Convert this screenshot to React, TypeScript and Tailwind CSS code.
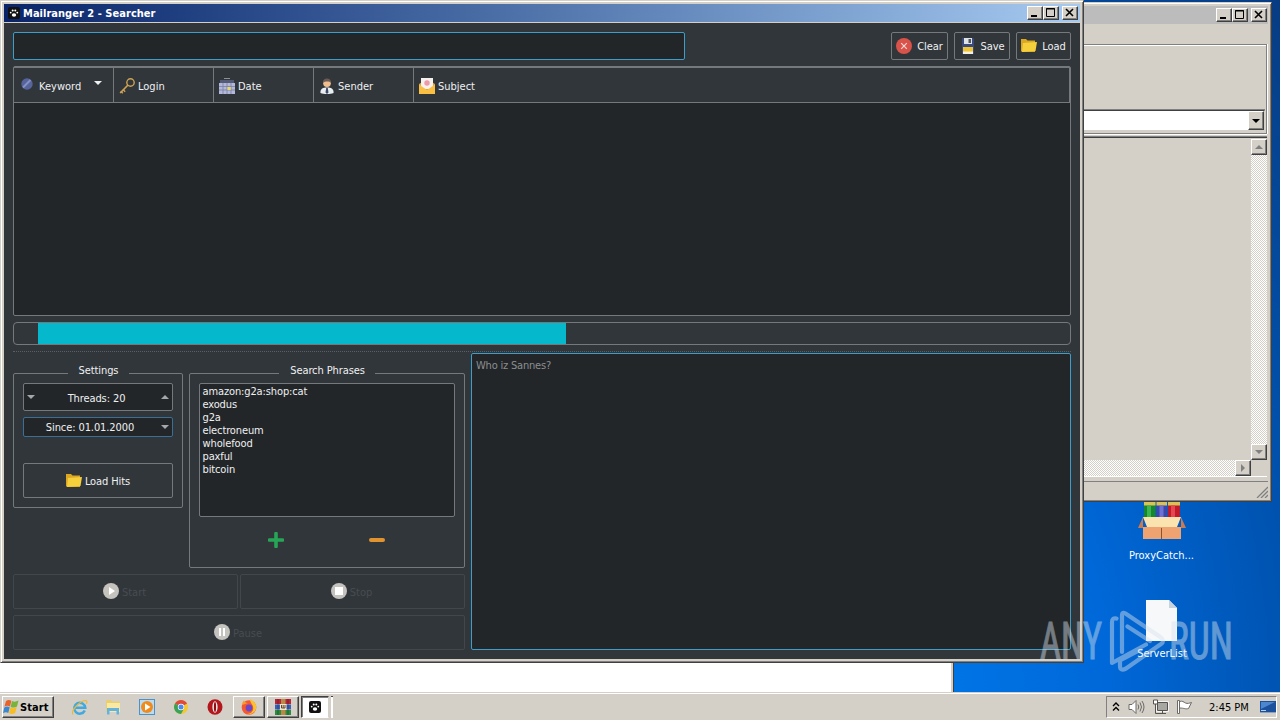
import type { ReactNode } from 'react';

const phrases = ['amazon:g2a:shop:cat', 'exodus', 'g2a', 'electroneum', 'wholefood', 'paxful', 'bitcoin'];

const raised =
  'bg-[#d4d0c8] border border-t-white border-l-white border-r-[#404040] border-b-[#404040] shadow-[inset_-1px_-1px_0_#808080]';

/* ---------- icons ---------- */

function Paw({ size = 12 }: { size?: number }) {
  return (
    <svg width={size} height={size} viewBox="0 0 12 12">
      <rect width="12" height="12" rx="2" fill="#111" />
      <ellipse cx="6" cy="8" rx="2.2" ry="1.700" fill="#fff" />
      <circle cx="2.7" cy="5.6" r=".9" fill="#fff" />
      <circle cx="4.7" cy="3.5" r="1" fill="#fff" />
      <circle cx="7.3" cy="3.5" r="1" fill="#fff" />
      <circle cx="9.3" cy="5.6" r=".9" fill="#fff" />
    </svg>
  );
}

function ClearIcon() {
  return (
    <svg width="16" height="16" viewBox="0 0 16 16">
      <circle cx="8" cy="8" r="8" fill="#d9534a" />
      <path d="M5.2 5.2l5.6 5.6M10.8 5.2l-5.6 5.6" stroke="#f6d9d5" strokeWidth="1.2" />
    </svg>
  );
}

function SaveIcon() {
  return (
    <svg width="16" height="16" viewBox="0 0 16 16">
      <path d="M2 0h11l1 1v15H2z" fill="#3b4a7c" />
      <path d="M4 0h8v6H4z" fill="#dfe3e4" />
      <path d="M8.5 1H11v4H8.5z" fill="#4d5564" />
      <path d="M3 9h10v7H3z" fill="#f3efe4" />
      <path d="M3 9h10v4.500H3z" fill="#f0c330" />
    </svg>
  );
}

function FolderIcon() {
  return (
    <svg width="16" height="16" viewBox="0 0 16 16">
      <path d="M0 1h5l1.500 1.500H14V14H1L0 13z" fill="#dba822" />
      <path d="M2 5L16 4l-1.500 9L1 14z" fill="#f6cf3c" />
    </svg>
  );
}

function KeywordIcon() {
  return (
    <svg width="12" height="12" viewBox="0 0 12 12">
      <circle cx="6" cy="6" r="5.700" fill="#57649b" />
      <path d="M2 9.500L9.500 2" stroke="#8491c4" strokeWidth="2" />
    </svg>
  );
}

function KeyIcon() {
  return (
    <svg width="16" height="16" viewBox="0 0 16 16" fill="none" stroke="#cda352">
      <circle cx="11.500" cy="4.500" r="3.700" strokeWidth="1.400" />
      <path d="M9 7L1.200 15" strokeWidth="1.700" />
      <path d="M4 11.500l2.200 2.200M1.800 13.200l2 2" strokeWidth="1.400" />
    </svg>
  );
}

function CalendarIcon() {
  return (
    <svg width="16" height="16" viewBox="0 0 16 16">
      <path d="M5 .5h6" stroke="#8d8f99" />
      <path d="M1 2h14v4H1z" fill="#535b76" />
      <path d="M0 5h16v11H0z" fill="#b3b7d8" />
      <path d="M0 8.500h16M0 12h16M4 5v11M8 5v11M12 5v11" stroke="#7a80a6" strokeWidth=".8" />
      <path d="M8.500 9h3.200v3H8.500z" fill="#e8dc62" />
    </svg>
  );
}

function SenderIcon() {
  return (
    <svg width="16" height="16" viewBox="0 0 16 16">
      <path d="M1.500 15c-.5-4 2-5.500 6.500-5.500s7 1.500 6.500 5.500c-3 1.300-10 1.300-13 0z" fill="#e9eef2" />
      <circle cx="8" cy="5.200" r="3.800" fill="#f0bd8c" />
      <path d="M4 4.500C4 1.500 5.500.5 8 .5s4 1 4 4C10.500 3 6 3 4 4.500z" fill="#6b5a55" />
      <path d="M7.200 10h1.600l.7 4.500L8 16l-1.500-1.500z" fill="#3c4c67" />
    </svg>
  );
}

function SubjectIcon() {
  return (
    <svg width="16" height="16" viewBox="0 0 16 16">
      <path d="M0 6l8-5 8 5v10H0z" fill="#e3a02d" />
      <path d="M2 0h12v11H2z" fill="#f5f1ef" />
      <circle cx="8" cy="5" r="2.700" fill="#ee9aa8" />
      <path d="M0 6.500l8 5.500 8-5.500V16H0z" fill="#f8bf43" />
    </svg>
  );
}

function RoundIcon({ children }: { children: ReactNode }) {
  return (
    <svg width="16" height="16" viewBox="0 0 16 16">
      <circle cx="8" cy="8" r="8" fill="#c4c3bd" />
      {children}
    </svg>
  );
}

function Triangle({ dir, fill }: { dir: 'up' | 'down' | 'right'; fill: string }) {
  const d = { up: 'M0 4L4 0L8 4z', down: 'M0 0h8L4 4z', right: 'M2 -2v8l4-4z' }[dir];
  return (
    <svg width="8" height="4" viewBox="0 0 8 4" overflow="visible" className="shrink-0">
      <path d={d} fill={fill} />
    </svg>
  );
}

function WindowsFlag() {
  return (
    <svg width="17" height="16" viewBox="0 0 17 16">
      <path d="M3 2C5 .5 6.500.700 8.400 1.700L7 7.600C5 6.600 3.500 6.600 1.400 7.800z" fill="#e8622c" />
      <path d="M9 2c2 1 4 .8 6.500-.5L14 7.600c-2 1.300-4.200 1.300-6.400.3z" fill="#79b33c" />
      <path d="M1.300 8.400c2-1.200 3.500-1.200 5.400-.2l-1.400 5.800c-1.700-1-3.300-1-5.300.2z" fill="#3a86cf" />
      <path d="M7.400 8.500c2 1 4 .8 6.400-.5L12.200 14c-2 1.300-4.200 1.400-6.200.3z" fill="#f6bd28" />
    </svg>
  );
}

function IeIcon() {
  return (
    <svg width="17" height="17" viewBox="0 0 17 17" fill="none">
      <path d="M13.800 11.500A5.500 5.500 0 1 1 14.300 8.800H4" stroke="#3fa9e0" strokeWidth="2.500" />
      <path d="M2 15.500C-1 13 8 2 14.500 1.500c2 0 1.500 2 .8 3.300" stroke="#e9b83a" strokeWidth="1.200" />
    </svg>
  );
}

function ExplorerIcon() {
  return (
    <svg width="16" height="16" viewBox="0 0 16 16">
      <path d="M1 1h5l1 1.500h8V13H1z" fill="#e9cf70" />
      <path d="M2 4h13v9H2z" fill="#f8e9a4" />
      <path d="M2 15.500V9h12v6.500h-2.500V12h-7v3.500z" fill="#63b2df" />
    </svg>
  );
}

function PlayerIcon() {
  return (
    <svg width="16" height="16" viewBox="0 0 16 16">
      <rect x=".5" y=".5" width="15" height="15" fill="#b9dcf2" stroke="#4b92c9" />
      <circle cx="8" cy="8" r="6" fill="#f18a1c" />
      <path d="M6 4.500v7L11.500 8z" fill="#fff" />
    </svg>
  );
}

function ChromeIcon() {
  return (
    <svg width="14" height="14" viewBox="0 0 14 14">
      <circle cx="7" cy="7" r="7" fill="#f5c731" />
      <path d="M7 7L.95 3.500A7 7 0 0 1 13.050 3.500z" fill="#de4a3c" />
      <path d="M7 7L.95 3.500A7 7 0 0 0 7 14l2.500-4.500z" fill="#3ba357" />
      <circle cx="7" cy="7" r="3.200" fill="#fff" />
      <circle cx="7" cy="7" r="2.500" fill="#4a8af0" />
    </svg>
  );
}

function OperaIcon() {
  return (
    <svg width="16" height="16" viewBox="0 0 16 16">
      <ellipse cx="8" cy="8" rx="7.500" ry="7.800" fill="#b3161b" />
      <ellipse cx="8" cy="8" rx="2.600" ry="5.800" fill="#f6eeec" />
      <ellipse cx="8" cy="8" rx="1.100" ry="5" fill="#8d0f14" />
    </svg>
  );
}

function FirefoxIcon() {
  return (
    <svg width="16" height="16" viewBox="0 0 16 16">
      <circle cx="8" cy="8.500" r="7.300" fill="#f5572f" />
      <path d="M9 0c4 2 7 5 6.200 9.500C14 14 9 16 6 15c5 0 7-4 6-7.500S9 4 9 0z" fill="#fdc32f" />
      <path d="M1.200 6C1 4 2 2.500 3 1.500 3.500 3 5 4 7 4z" fill="#fb9a2c" />
      <circle cx="8" cy="9" r="3.400" fill="#6a47c8" />
    </svg>
  );
}

function WinrarIcon() {
  return (
    <svg width="16" height="16" viewBox="0 0 16 16">
      <path d="M0 0h16v5H0z" fill="#b52534" />
      <path d="M0 5.500h16v5H0z" fill="#3a5fb4" />
      <path d="M0 11h16v5H0z" fill="#2e8a3c" />
      <path d="M6 0h4.500v16H6z" fill="#b88a45" />
      <path d="M5 5h6.500v6H5z" fill="#eee6d0" />
      <path d="M6.500 6v3h3.500V6M8.200 6v3" stroke="#67492a" fill="none" />
      <path d="M3 0v16M13 0v16" stroke="#1b1b2b" strokeOpacity=".4" />
    </svg>
  );
}

function SpeakerIcon() {
  return (
    <svg width="17" height="16" viewBox="0 0 17 16" fill="none" stroke="#6c6a66">
      <path d="M1 5.500h3l4-4v13l-4-4H1z" fill="#fff" />
      <path d="M10 5.500q1.500 2.500 0 5M12 3.500q3 4.500 0 9M14 2q4 6 0 12" />
    </svg>
  );
}

function NetworkIcon() {
  return (
    <svg width="17" height="16" viewBox="0 0 17 16" fill="none" stroke="#55534f">
      <path d="M5.500 3.500h10v8h-10z" fill="#a9a7a2" stroke="#fff" strokeWidth="2.500" />
      <path d="M5.500 3.500h10v8h-10zM7 14.500h7M10.500 12v2" fill="#a9a7a2" />
      <path d="M1.500 1v4h4V1z" fill="#fff" />
      <path d="M3.500 5v9.500H7" />
    </svg>
  );
}

function FlagIcon() {
  return (
    <svg width="17" height="16" viewBox="0 0 17 16" stroke="#6c6a66">
      <path d="M3.500 2.500c3-1 4 .5 6 1.500s4 0 6-.5l-3 6c-3 1-4-.5-9-.5z" fill="#fff" />
      <path d="M1.500 1.500h2v13h-2z" fill="#fff" />
    </svg>
  );
}

function DesktopIcon() {
  return (
    <svg width="16" height="14" viewBox="0 0 16 14">
      <path d="M0 1h16v11H0z" fill="#1c4f9c" />
      <path d="M1 2h14L1 9z" fill="#4b86cf" />
      <path d="M1 10h5v1H1z" fill="#b5d2ee" />
      <path d="M0 12h16v1H0z" fill="#8aa3c4" />
    </svg>
  );
}

function ArchiveBox() {
  return (
    <svg width="48" height="50" viewBox="0 0 48 50">
      <path d="M6 2h11.500v26H6z" fill="#17862c" />
      <path d="M18.500 2H29v26H18.500z" fill="#4046a8" />
      <path d="M30 2h12v26H30z" fill="#c01b2b" />
      <path d="M6 12h11.500v3.500H6zM18.500 12H29v3.500H18.500zM30 12h12v3.500H30z" fill="#d9c358" />
      <path d="M9 15.500h4v12H9z" fill="#3bb552" />
      <path d="M21.500 15.500h4v12h-4z" fill="#6c72d4" />
      <path d="M33 15.500h4v12h-4z" fill="#e8464f" />
      <path d="M5 27L0 38h5zM43 27l5 11h-5z" fill="#c87a52" />
      <path d="M5 37h38v12H5z" fill="#efa370" />
      <path d="M5 27h38l-4 10H9z" fill="#fbe3b0" />
      <path d="M23.500 38v11" stroke="#8d5230" />
    </svg>
  );
}

/* ---------- window parts ---------- */

function CaptionButton({ children }: { children: ReactNode }) {
  return (
    <button className={`w-4 h-3.5 ${raised}`}>
      <svg width="14" height="12" viewBox="0 0 14 12" fill="none" stroke="#000" className="block">
        {children}
      </svg>
    </button>
  );
}

function CaptionButtons() {
  return (
    <div className="flex">
      <CaptionButton>
        <path d="M3 9h6" strokeWidth="2" />
      </CaptionButton>
      <CaptionButton>
        <path d="M2.500 1.500h8v8h-8zM2 2h9" />
      </CaptionButton>
      <div className="w-[3px]" />
      <CaptionButton>
        <path d="M3 2l7 7M10 2l-7 7" strokeWidth="1.600" />
      </CaptionButton>
    </div>
  );
}

function ToolButton({ className, children }: { className: string; children: ReactNode }) {
  return (
    <button
      className={`h-7 flex items-center justify-center gap-[5px] border border-[#76797c] rounded-xs text-[#eff0f1] tracking-[-0.1px] ${className}`}
    >
      {children}
    </button>
  );
}

function HeaderCell({ icon, label }: { icon: ReactNode; label: string }) {
  return (
    <div className="w-[100px] flex items-center gap-[3px] pl-[5px] pt-[1px] border-r border-[#76797c]">
      {icon}
      <span className="pt-[2px]">{label}</span>
    </div>
  );
}

function DisabledButton({ icon, label, className = '' }: { icon: ReactNode; label: string; className?: string }) {
  return (
    <button
      disabled
      className={`h-[35px] flex items-center justify-center gap-[3px] pr-[2px] border border-[#42474c] rounded-xs text-[#484c50] ${className}`}
    >
      <span className="pb-[2px]">{icon}</span>
      <span className="pt-[2px]">{label}</span>
    </button>
  );
}

function ScrollButton({ dir }: { dir: 'up' | 'down' | 'right' }) {
  return (
    <div className={`w-4 h-4 shrink-0 flex items-center justify-center ${raised}`}>
      <Triangle dir={dir} fill="#808080" />
    </div>
  );
}

const trackPattern = 'bg-[repeating-conic-gradient(#ffffff_0_25%,#d4d0c8_0_50%)] bg-[size:2px_2px]';

/* ---------- windows ---------- */

function BackWindow() {
  return (
    <div className="absolute left-[700px] top-[2px] w-[572px] h-[500px] flex flex-col bg-[#d4d0c8] border border-t-[#d4d0c8] border-l-[#d4d0c8] border-r-[#404040] border-b-[#404040] shadow-[inset_1px_1px_0_#fff,inset_-1px_-1px_0_#808080] p-[3px]">
      <div className="h-[18px] shrink-0 flex items-center justify-end pr-[1px] bg-[#bcbcbc]">
        <CaptionButtons />
      </div>
      <div className="mt-5 mr-[1px] h-[90px] shrink-0 flex flex-col justify-end border border-[#808080] shadow-[inset_0_1px_0_#fff,0_1px_0_#fff,1px_0_0_#fff] pb-[2px] pr-[1px]">
        <div className="h-[21px] flex justify-end bg-white border border-t-[#404040] border-[#d4d0c8] shadow-[0_-1px_0_#808080]">
          <div className={`w-4 h-[19px] flex items-center justify-center ${raised}`}>
            <Triangle dir="down" fill="#000" />
          </div>
        </div>
      </div>
      <div className="mt-[2px] mr-[1px] h-[341px] shrink-0 flex flex-col border-t border-[#808080] border-b border-b-white shadow-[inset_0_1px_0_#404040] pt-[2px]">
        <div className="h-[322px] flex">
          <div className="flex-1" />
          <div className={`w-4 flex flex-col justify-between ${trackPattern}`}>
            <ScrollButton dir="up" />
            <ScrollButton dir="down" />
          </div>
        </div>
        <div className="h-4 flex pr-4">
          <div className={`flex-1 ${trackPattern}`} />
          <ScrollButton dir="right" />
        </div>
      </div>
      <div className="mt-[4px] flex-1 flex justify-end items-end border-t border-[#808080]">
        <svg width="12" height="12" viewBox="0 0 12 12" stroke="#808080" strokeWidth="1.300">
          <path d="M1 12L12 1M5 12l7-7M9 12l3-3" />
        </svg>
      </div>
    </div>
  );
}

function Toolbar() {
  return (
    <div className="flex justify-between">
      <div className="w-[672px] h-7 bg-[#232629] border border-[#3d9fc9] rounded-xs" />
      <div className="flex gap-[6px]">
        <ToolButton className="w-[57px]">
          <ClearIcon />
          <span className="pt-[2px]">Clear</span>
        </ToolButton>
        <ToolButton className="w-[56px]">
          <SaveIcon />
          <span className="pt-[2px]">Save</span>
        </ToolButton>
        <ToolButton className="w-[55px]">
          <FolderIcon />
          <span className="pt-[2px]">Load</span>
        </ToolButton>
      </div>
    </div>
  );
}

function ResultTable() {
  return (
    <div className="mt-[6px] h-[250px] flex flex-col bg-[#232629] border border-[#76797c] rounded-xs">
      <div className="h-9 flex bg-[#31363b] border-t border-b border-r border-[#76797c]">
        <div className="w-[100px] flex items-center pl-[7px] pt-[1px] border-r border-[#76797c]">
          <div className="pb-[4px]">
            <KeywordIcon />
          </div>
          <span className="pl-[6px] pt-[2px] w-[61px]">Keyword</span>
          <div className="pb-[5px]">
            <Triangle dir="down" fill="#eff0f1" />
          </div>
        </div>
        <HeaderCell icon={<KeyIcon />} label="Login" />
        <HeaderCell icon={<CalendarIcon />} label="Date" />
        <HeaderCell icon={<SenderIcon />} label="Sender" />
        <div className="flex items-center gap-[3px] pl-[5px] pt-[1px]">
          <SubjectIcon />
          <span className="pt-[2px]">Subject</span>
        </div>
      </div>
    </div>
  );
}

function SettingsGroup() {
  return (
    <fieldset className="w-[170px] h-[143px] px-[9px] border border-[#76797c] rounded-xs">
      <legend className="mx-auto w-[61px] h-[17px] pl-[1px] text-center leading-[11px] tracking-[-0.1px]">Settings</legend>
      <div className="mt-[1px] h-7 flex items-center justify-between px-[3px] bg-[#232629] border border-[#76797c] rounded-xs">
        <Triangle dir="down" fill="#a5a7a9" />
        <span className="pt-[3px] pr-[3px] tracking-[-0.1px]">Threads: 20</span>
        <Triangle dir="up" fill="#a5a7a9" />
      </div>
      <div className="mt-[6px] h-5 flex items-center bg-[#232629] border border-[#3b6f96] rounded-xs">
        <span className="w-[132px] pt-[2px] mr-[5px] text-center tracking-[-0.1px]">Since: 01.01.2000</span>
        <Triangle dir="down" fill="#a5a7a9" />
      </div>
      <button className="mt-[26px] w-full h-[35px] flex items-center justify-center gap-[3px] border border-[#76797c] rounded-xs tracking-[-0.1px]">
        <FolderIcon />
        <span className="pt-[2px]">Load Hits</span>
      </button>
    </fieldset>
  );
}

function PhrasesGroup() {
  return (
    <fieldset className="w-[276px] h-[203px] px-[9px] border border-[#76797c] rounded-xs">
      <legend className="mx-auto w-[96px] h-[17px] pl-[1px] text-center leading-[11px] tracking-[-0.1px]">Search Phrases</legend>
      <ul className="mt-[1px] h-[134px] pl-[2.5px] pt-[1px] bg-[#232629] border border-[#76797c] rounded-xs leading-[13px] tracking-[-0.12px]">
        {phrases.map((p) => (
          <li key={p}>{p}</li>
        ))}
      </ul>
      <div className="mt-[15px] flex pl-[69px] gap-[85px]">
        <svg width="16" height="16" viewBox="0 0 16 16">
          <path d="M8 1.500v13M1.500 8h13" stroke="#27a556" strokeWidth="3.600" strokeLinecap="round" />
        </svg>
        <svg width="16" height="16" viewBox="0 0 16 16">
          <path d="M2 8h12" stroke="#e0932f" strokeWidth="4" strokeLinecap="round" />
        </svg>
      </div>
    </fieldset>
  );
}

function MainWindow() {
  return (
    <div className="absolute left-0 top-0 w-[1084px] h-[663px] bg-[#d4d0c8] border border-t-[#d4d0c8] border-l-[#d4d0c8] border-r-[#404040] border-b-[#404040] shadow-[inset_1px_1px_0_#fff,inset_-1px_-1px_0_#808080] p-[3px]">
      <div className="h-[18px] flex items-center justify-between pl-1 pr-[2px] bg-linear-to-r from-[#0a246a] to-[#a6caf0]">
        <div className="flex items-center gap-[3px] text-white font-bold">
          <Paw />
          <span className="pt-[1px] tracking-[0.03px]">Mailranger 2 - Searcher</span>
        </div>
        <CaptionButtons />
      </div>
      <div className="mt-[1px] h-[636px] px-[9px] pt-[9px] bg-[#31363b] text-[#eff0f1]">
        <Toolbar />
        <ResultTable />
        <div className="mt-[6px] h-[23px] pl-6 border border-[#76797c] rounded-[4px]">
          <div className="w-[528px] h-[21px] bg-[#05b8cc]" />
        </div>
        <div className="h-2 pt-[6px]">
          <div className="border-t border-dotted border-[#5a5f63]" />
        </div>
        <div className="flex gap-[6px]">
          <div className="w-[452px] pt-3 flex flex-col gap-[6px]">
            <div className="h-[203px] flex gap-[6px]">
              <SettingsGroup />
              <PhrasesGroup />
            </div>
            <div className="flex gap-[2px]">
              <DisabledButton
                className="flex-1"
                label="Start"
                icon={
                  <RoundIcon>
                    <path d="M6 4v8l6-4z" fill="#fff" />
                  </RoundIcon>
                }
              />
              <DisabledButton
                className="flex-1"
                label="Stop"
                icon={
                  <RoundIcon>
                    <path d="M4 4h8v8H4z" fill="#fff" />
                  </RoundIcon>
                }
              />
            </div>
            <DisabledButton
              label="Pause"
              icon={
                <RoundIcon>
                  <path d="M6 4v8M10 4v8" stroke="#fff" strokeWidth="2" />
                </RoundIcon>
              }
            />
          </div>
          <div className="w-[600px] h-[297px] px-[4px] pt-[5px] bg-[#232629] border border-[#3d9fc9] rounded-xs text-[#8b8e90] tracking-[-0.2px]">
            Who iz Sannes?
          </div>
        </div>
      </div>
    </div>
  );
}

function Watermark() {
  return (
    <svg
      className="absolute left-[1036px] top-[600px]"
      width="220"
      height="80"
      viewBox="0 -6 220 80"
      opacity=".45"
      fill="#d7e3ee"
      fontFamily="Roboto, sans-serif"
      fontSize="51"
    >
      <g stroke="#d7e3ee" strokeWidth="1">
        <text x="4" y="53" textLength="62" lengthAdjust="spacingAndGlyphs">
          ANY
        </text>
        <text x="133" y="53" textLength="64" lengthAdjust="spacingAndGlyphs">
          RUN
        </text>
      </g>
      <path
        d="M80.500 12.500Q76 11.500 76 16V57L110 38.500M86 46V9Q86 5.500 89.500 7.500L125 31.500Q129 35 125 38L90 62.500Q84 65.500 84 60V54.500L104 44M91.500 20.500L114 35"
        fill="none"
        stroke="#d7e3ee"
        strokeWidth="4.200"
        strokeLinejoin="round"
        strokeLinecap="round"
      />
    </svg>
  );
}

function Taskbar() {
  return (
    <div className="h-7 flex items-center justify-between pl-[2px] pr-[3px] pt-[2px] bg-[#d4d0c8] shadow-[inset_0_1px_0_#d4d0c8,inset_0_2px_0_#fff] text-black">
      <div className="flex items-center">
        <button className={`w-[52px] h-[22px] flex items-center font-bold ${raised}`}>
          <WindowsFlag />
          <span className="pt-[1px] tracking-[0.1px]">Start</span>
        </button>
        <div className="flex items-center pl-[8px] pr-[1px]">
          <div className="w-[34px] flex justify-center"><IeIcon /></div>
          <div className="w-[34px] flex justify-center"><ExplorerIcon /></div>
          <div className="w-[34px] flex justify-center"><PlayerIcon /></div>
          <div className="w-[34px] flex justify-center"><ChromeIcon /></div>
          <div className="w-[34px] flex justify-center"><OperaIcon /></div>
        </div>
        <div className="flex gap-[2px]">
          <div className={`w-8 h-[22px] flex items-center justify-center ${raised}`}>
            <FirefoxIcon />
          </div>
          <div className={`w-8 h-[22px] flex items-center justify-center ${raised}`}>
            <WinrarIcon />
          </div>
          <div className="w-[28px] h-[22px] flex items-center justify-center bg-white border border-t-[#404040] border-l-[#404040] border-r-[#d4d0c8] border-b-white shadow-[inset_1px_1px_0_#808080]">
            <Paw />
          </div>
          <div className="w-[2px] h-[22px] bg-white border-t border-[#404040]" />
        </div>
      </div>
      <div className="w-[171px] h-[22px] flex items-center pl-[5px] border border-t-[#808080] border-l-[#808080] border-r-white border-b-white">
        <svg width="8" height="10" viewBox="0 0 8 10" fill="none" stroke="#000" strokeWidth="1.400">
          <path d="M1 4l3-3 3 3M1 8.500l3-3 3 3" />
        </svg>
        <div className="flex gap-[7px] pl-[8px] w-[89px]">
          <SpeakerIcon />
          <NetworkIcon />
          <FlagIcon />
        </div>
        <span className="w-[51px] pt-[1px] whitespace-nowrap">2:45 PM</span>
        <DesktopIcon />
      </div>
    </div>
  );
}

export default function App() {
  return (
    <div className="w-[1280px] h-[720px] overflow-hidden flex flex-col text-[11px] leading-[14px] [font-family:'DejaVu_Sans_Condensed','DejaVu_Sans',sans-serif] [font-stretch:condensed]">
      <div className="relative h-[692px] overflow-hidden bg-[radial-gradient(ellipse_600px_900px_at_900px_700px,#0078ea_0%,#0068d8_35%,#0053b0_65%,#083c82_100%)]">
        {/* desktop shortcuts */}
        <div className="absolute left-[1122px] top-[490px] w-20 flex flex-col items-center text-white">
          <ArchiveBox />
          <span className="mt-[9px] pr-[1px]">ProxyCatch...</span>
        </div>
        <div className="absolute left-[1122px] top-[600px] w-20 flex flex-col items-center text-white">
          <svg width="32" height="41" viewBox="0 0 32 41">
            <path d="M0 0h23l8 8v33H0z" fill="#f7f8f9" />
            <path d="M23 0l8 8h-8z" fill="#c9d3dc" />
          </svg>
          <span className="mt-[6px]">ServerList</span>
        </div>

        <div className="absolute left-0 top-[600px] w-[954px] h-[92px] bg-white border-r border-[#404040] shadow-[inset_-2px_0_0_#d4d0c8]" />
        <BackWindow />
        <MainWindow />
        <Watermark />
      </div>
      <Taskbar />
    </div>
  );
}
